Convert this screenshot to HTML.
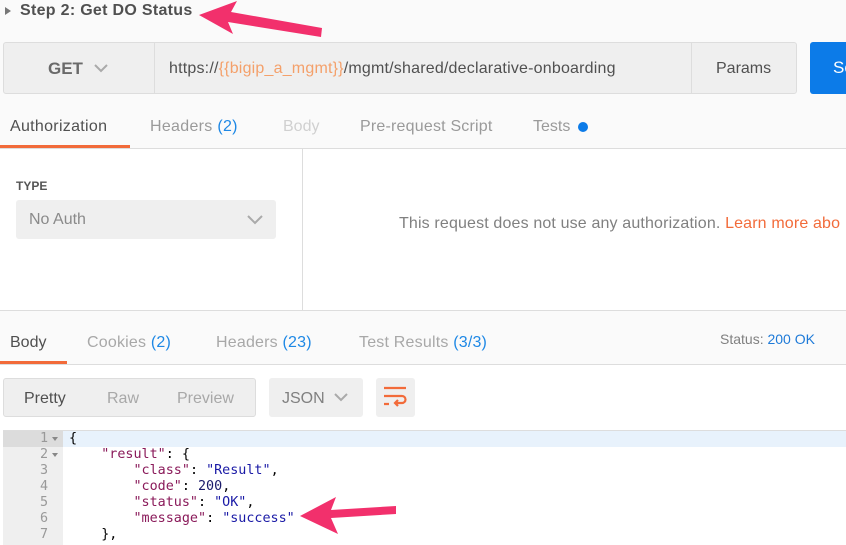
<!DOCTYPE html>
<html><head><meta charset="utf-8"><style>
*{margin:0;padding:0;box-sizing:border-box}
body{width:846px;height:545px;overflow:hidden;background:#fafafa;font-family:"Liberation Sans",sans-serif;position:relative}
.a{position:absolute;white-space:nowrap}
.mono{font-family:"DejaVu Sans Mono",monospace;font-size:13.4px;line-height:16px;white-space:pre}
.k{color:#8a1a5a}.s{color:#1a1aa6}.n{color:#1a1a6a}
</style></head><body>
<div class="a" style="left:5px;top:7px;width:0;height:0;border-left:6px solid #777;border-top:4px solid transparent;border-bottom:4px solid transparent"></div>
<div class="a" style="left:20px;top:2px;font-size:16px;font-weight:bold;color:#505050;letter-spacing:0.3px">Step 2: Get DO Status</div>

<div class="a" style="left:3px;top:42px;width:794px;height:52px;background:#efefef;border:1px solid #ddd;border-radius:3px"></div>
<div class="a" style="left:154px;top:43px;width:1px;height:50px;background:#ddd"></div>
<div class="a" style="left:691px;top:43px;width:1px;height:50px;background:#ddd"></div>
<div class="a" style="left:48px;top:59px;font-size:17px;color:#6a6a6a;font-weight:bold">GET</div>
<svg class="a" style="left:93px;top:63px" width="16" height="10"><path d="M2 2l6 6 6-6" stroke="#aaa" stroke-width="2" fill="none"/></svg>
<div class="a" style="left:169px;top:60px;font-size:16px;color:#505050;letter-spacing:0.2px">https://<span style="color:#f4a06a">{{bigip_a_mgmt}}</span>/mgmt/shared/declarative-onboarding</div>
<div class="a" style="left:716px;top:60px;font-size:16px;color:#505050">Params</div>
<div class="a" style="left:810px;top:42px;width:40px;height:52px;background:#0c7be8;border-radius:3px;color:#fff;font-size:17px;padding:16px 0 0 23px">Se</div>

<div class="a" style="left:10px;top:118px;font-size:16px;color:#505050;letter-spacing:0.3px">Authorization</div>
<div class="a" style="left:150px;top:118px;font-size:16px;color:#9a9a9a;letter-spacing:0.3px">Headers <span style="color:#1e88e5">(2)</span></div>
<div class="a" style="left:283px;top:118px;font-size:16px;color:#d0d0d0">Body</div>
<div class="a" style="left:360px;top:118px;font-size:16px;color:#9a9a9a;letter-spacing:0.2px">Pre-request Script</div>
<div class="a" style="left:533px;top:118px;font-size:16px;color:#9a9a9a">Tests</div>
<div class="a" style="left:578px;top:122px;width:10px;height:10px;border-radius:50%;background:#0c7be8"></div>
<div class="a" style="left:0;top:145px;width:130px;height:3px;background:#f26b3a"></div>
<div class="a" style="left:0;top:148px;width:846px;height:163px;background:#fff;border-top:1px solid #ddd;border-bottom:1px solid #ddd"></div>
<div class="a" style="left:302px;top:149px;width:1px;height:161px;background:#ddd"></div>
<div class="a" style="left:16px;top:179px;font-size:12px;font-weight:bold;color:#555">TYPE</div>
<div class="a" style="left:16px;top:200px;width:260px;height:39px;background:#efefef;border-radius:3px"></div>
<div class="a" style="left:29px;top:211px;font-size:16px;color:#8a8a8a">No Auth</div>
<svg class="a" style="left:246px;top:214px" width="18" height="11"><path d="M2 2l7 7 7-7" stroke="#aaa" stroke-width="2" fill="none"/></svg>
<div class="a" style="left:399px;top:215px;font-size:16px;color:#808080;letter-spacing:0.15px">This request does not use any authorization. <span style="color:#f26b3a">Learn more abo</span></div>

<div class="a" style="left:10px;top:334px;font-size:16px;color:#505050">Body</div>
<div class="a" style="left:87px;top:334px;font-size:16px;color:#a8a8a8;letter-spacing:0.2px">Cookies <span style="color:#1e88e5">(2)</span></div>
<div class="a" style="left:216px;top:334px;font-size:16px;color:#a8a8a8;letter-spacing:0.2px">Headers <span style="color:#1e88e5">(23)</span></div>
<div class="a" style="left:359px;top:334px;font-size:16px;color:#a8a8a8;letter-spacing:0.2px">Test Results <span style="color:#1e88e5">(3/3)</span></div>
<div class="a" style="left:720px;top:331px;font-size:14px;color:#808080">Status: <span style="color:#1e7ad8">200 OK</span></div>
<div class="a" style="left:0;top:361px;width:67px;height:3px;background:#f26b3a"></div>
<div class="a" style="left:0;top:364px;width:846px;height:181px;background:#fff;border-top:1px solid #ddd"></div>

<div class="a" style="left:3px;top:378px;width:253px;height:39px;background:#efefef;border:1px solid #ddd;border-radius:3px"></div>
<div class="a" style="left:24px;top:390px;font-size:16px;color:#505050">Pretty</div>
<div class="a" style="left:107px;top:390px;font-size:16px;color:#a8a8a8">Raw</div>
<div class="a" style="left:177px;top:390px;font-size:16px;color:#a8a8a8">Preview</div>
<div class="a" style="left:269px;top:378px;width:94px;height:39px;background:#efefef;border-radius:3px"></div>
<div class="a" style="left:282px;top:390px;font-size:16px;color:#808080">JSON</div>
<svg class="a" style="left:333px;top:392px" width="16" height="10"><path d="M2 2l6 6 6-6" stroke="#aaa" stroke-width="2" fill="none"/></svg>
<div class="a" style="left:376px;top:378px;width:39px;height:39px;background:#efefef;border-radius:3px"></div>
<svg class="a" style="left:383px;top:386px" width="26" height="24"><path d="M1 2h22M1 10h18a3.5 3.5 0 0 1 0 7h-7M15 14l-3 3 3 3M1 18h5" stroke="#f26b3a" stroke-width="2.2" fill="none"/></svg>

<div class="a" style="left:3px;top:430px;width:843px;height:1px;background:#ddd"></div>
<div class="a" style="left:3px;top:431px;width:60px;height:114px;background:#efefef"></div>
<div class="a" style="left:3px;top:431px;width:60px;height:16px;background:#dcdcdc"></div>
<div class="a" style="left:63px;top:431px;width:783px;height:16px;background:#e8f2fc"></div>
<div class="a mono" style="left:3px;top:431px;width:45px;text-align:right;color:#999">1
2
3
4
5
6
7</div>
<div class="a" style="left:52px;top:437px;border-top:4px solid #888;border-left:3px solid transparent;border-right:3px solid transparent"></div>
<div class="a" style="left:52px;top:453px;border-top:4px solid #888;border-left:3px solid transparent;border-right:3px solid transparent"></div>
<div class="a mono" style="left:69px;top:431px;color:#000">{
    <span class="k">"result"</span>: {
        <span class="k">"class"</span>: <span class="s">"Result"</span>,
        <span class="k">"code"</span>: <span class="n">200</span>,
        <span class="k">"status"</span>: <span class="s">"OK"</span>,
        <span class="k">"message"</span>: <span class="s">"success"</span>
    },</div>

<svg class="a" style="left:0;top:0" width="846" height="545">
<polygon points="199,15 237,1 231,12 322,28 321,37 228,22 233,34" fill="#f2306c"/>
<polygon points="300,516 336,497 331,510 396,506 396,514 331,518 338,534" fill="#f2306c"/>
</svg>
</body></html>
